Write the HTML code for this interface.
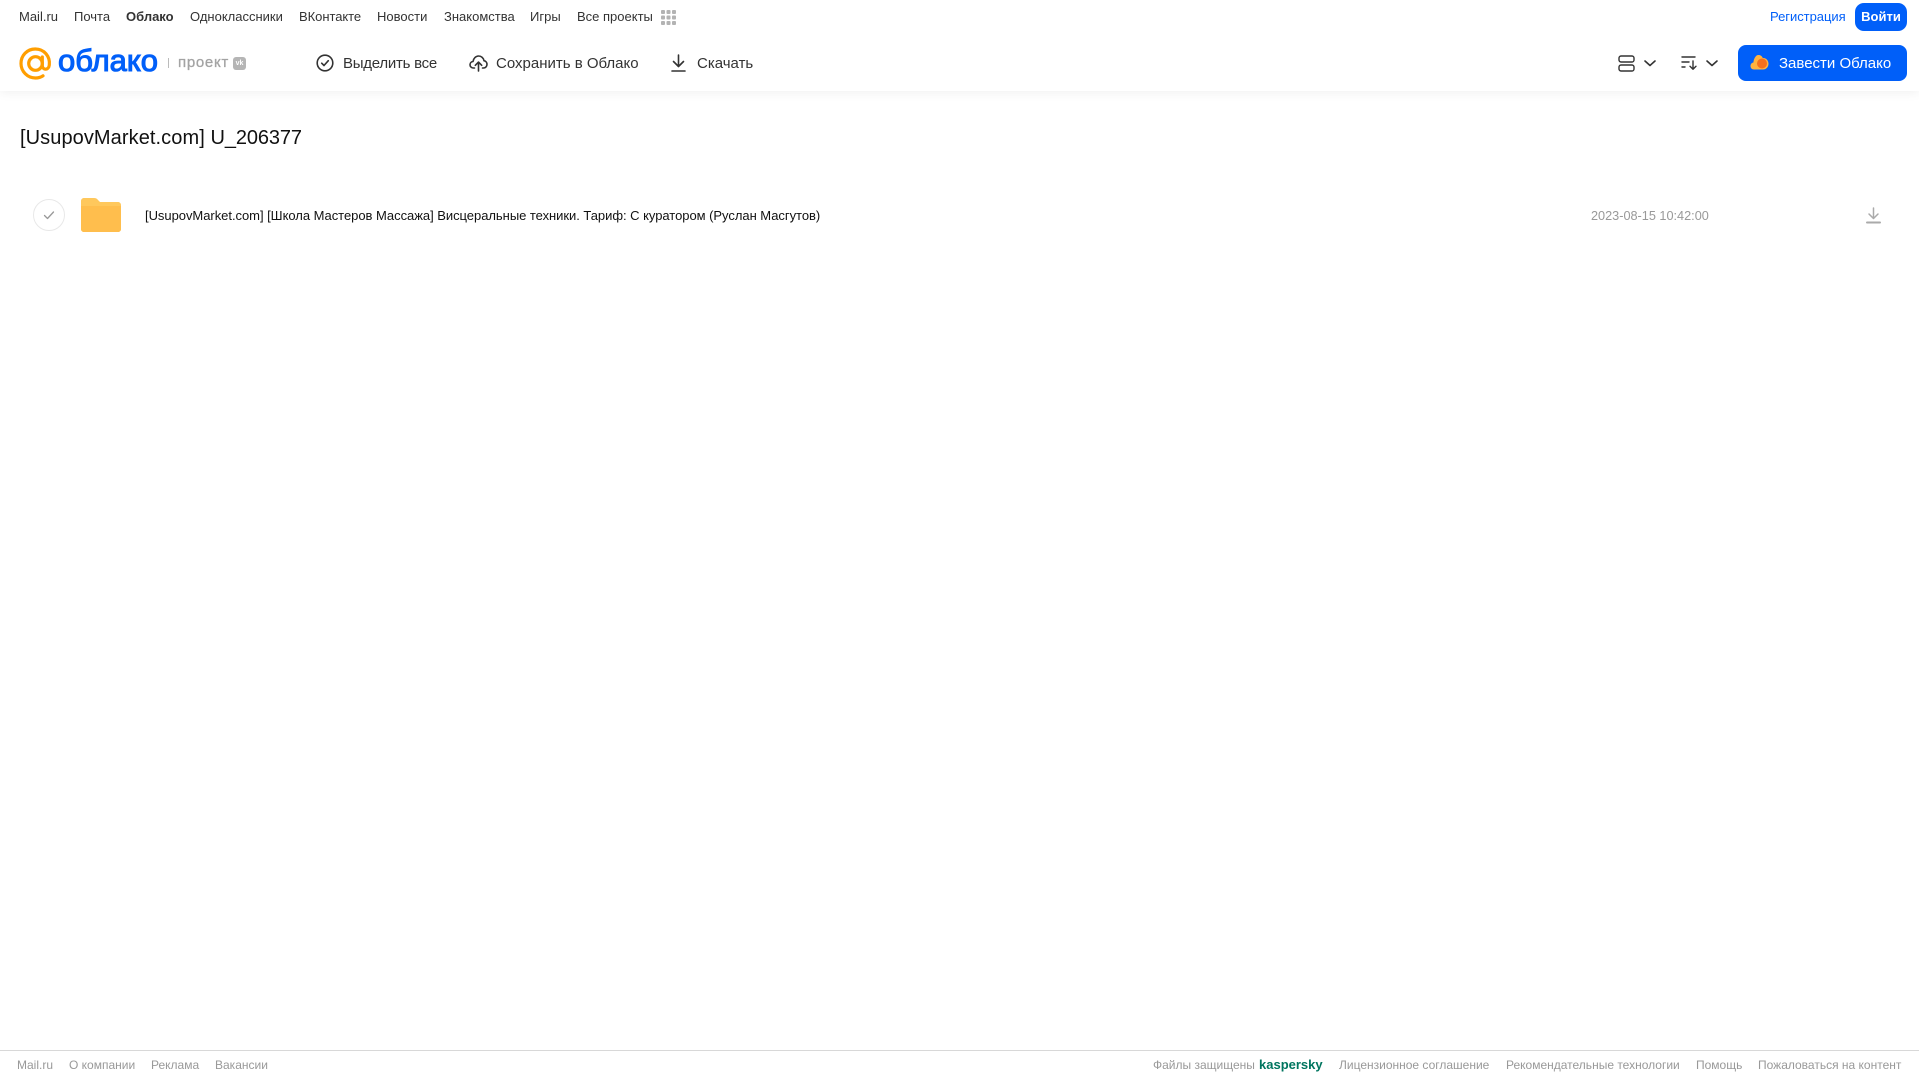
<!DOCTYPE html>
<html lang="ru">
<head>
<meta charset="utf-8">
<title>[UsupovMarket.com] U_206377</title>
<style>
html,body{margin:0;padding:0;background:#fff;width:1919px;height:1079px;overflow:hidden;font-family:"Liberation Sans",Arial,sans-serif}
.t{position:absolute;white-space:nowrap;line-height:16px}
.n{font-size:13px;color:#333;top:9px}
.a{font-size:15px;color:#333;top:56px}
.f{font-size:12px;color:#999;top:1057px}
svg{position:absolute;overflow:visible}
#hdr{position:absolute;left:0;top:0;width:1919px;height:91px;background:#fff;box-shadow:0 2px 10px rgba(0,0,0,.06)}
</style>
</head>
<body>
<div id="hdr"></div>

<span class="t n" style="left:19px">Mail.ru</span>
<span class="t n" style="left:74px">Почта</span>
<span class="t n" style="left:126px;font-weight:700">Облако</span>
<span class="t n" style="left:190px">Одноклассники</span>
<span class="t n" style="left:299px;letter-spacing:-.05px">ВКонтакте</span>
<span class="t n" style="left:377px">Новости</span>
<span class="t n" style="left:444px">Знакомства</span>
<span class="t n" style="left:530px">Игры</span>
<span class="t n" style="left:577px">Все проекты</span>
<svg style="left:661px;top:10px" width="15" height="15" viewBox="0 0 15 15" fill="#b3b3b3">
<rect x="0" y="0" width="4" height="4" rx="1"/><rect x="5.500" y="0" width="4" height="4" rx="1"/><rect x="11" y="0" width="4" height="4" rx="1"/>
<rect x="0" y="5.500" width="4" height="4" rx="1"/><rect x="5.500" y="5.500" width="4" height="4" rx="1"/><rect x="11" y="5.500" width="4" height="4" rx="1"/>
<rect x="0" y="11" width="4" height="4" rx="1"/><rect x="5.500" y="11" width="4" height="4" rx="1"/><rect x="11" y="11" width="4" height="4" rx="1"/>
</svg>

<span class="t n" style="left:1770px;color:#005ff9;letter-spacing:-.03px">Регистрация</span>
<div style="position:absolute;left:1855px;top:3px;width:52px;height:28px;border-radius:9px;background:#005ff9;color:#fff;font-size:13px;font-weight:700;line-height:28px;text-align:center">Войти</div>

<svg style="left:19px;top:47px" width="33" height="33" viewBox="0 0 33 33" fill="none" stroke="#ff9e00" stroke-width="3.200">
<circle cx="16.500" cy="16.500" r="6.800"/>
<path d="M23.300 10v8.500c0 5 6.500 5 7-.5 1-8.500-5-16-14-16C8 2 2 8.500 2 16.500S8.500 31 16.500 31c3 0 5.500-.8 7.500-2.200" stroke-linecap="round"/>
</svg>
<svg style="left:56px;top:40px" width="106" height="44" viewBox="0 0 106 44">
<text x="2" y="31" font-family="Liberation Sans" font-size="31" font-weight="400" fill="#005ff9" stroke="#005ff9" stroke-width="1.100" textLength="100" lengthAdjust="spacingAndGlyphs">облако</text>
</svg>
<div style="position:absolute;left:168px;top:58px;width:1px;height:10px;background:#bbb"></div>
<span class="t" style="left:178px;top:55px;font-size:15px;color:#a3a3a3;letter-spacing:.7px;-webkit-text-stroke:.3px #a3a3a3">проект</span>
<div style="position:absolute;left:233px;top:57px;width:13px;height:13px;border-radius:3px;background:#b5b5b5;color:#fff;font-size:7px;font-weight:700;line-height:13px;text-align:center">vk</div>

<svg style="left:316px;top:54px" width="18" height="18" viewBox="0 0 18 18" fill="none" stroke="#333" stroke-width="1.600" stroke-linecap="round" stroke-linejoin="round">
<circle cx="9" cy="9" r="7.800"/><path d="M5.700 9.200l2.300 2.300 4.300-4.800"/>
</svg>
<span class="t a" style="left:343px;letter-spacing:-.25px">Выделить все</span>

<svg style="left:469px;top:54px" width="19" height="18" viewBox="0 0 19 18" fill="none" stroke="#333" stroke-width="1.600" stroke-linecap="round" stroke-linejoin="round">
<path d="M5.500 14H4.500C2.500 14 1 12.500 1 10.700c0-1.700 1.300-3 3-3.200C4.500 4.300 6.800 2 9.600 2c2.700 0 5 2 5.400 4.700 1.800.3 3 1.900 3 3.600 0 2-1.500 3.700-3.500 3.700h-1"/>
<path d="M9.500 17V8.500M6.300 11.300l3.200-3.200 3.200 3.200"/>
</svg>
<span class="t a" style="left:496px">Сохранить в Облако</span>

<svg style="left:671px;top:54px" width="15" height="18" viewBox="0 0 15 18" fill="none" stroke="#333" stroke-width="1.600" stroke-linecap="round" stroke-linejoin="round">
<path d="M7.500 1v11M2.500 7.500l5 5 5-5M1 17h13"/>
</svg>
<span class="t a" style="left:697px">Скачать</span>

<svg style="left:1618px;top:55px" width="17" height="17" viewBox="0 0 17 17" fill="none" stroke="#333" stroke-width="1.400">
<rect x="1" y="1" width="15" height="6" rx="2"/><rect x="1" y="10" width="15" height="6" rx="2"/>
</svg>
<svg style="left:1644px;top:60px" width="12" height="7" viewBox="0 0 12 7" fill="none" stroke="#333" stroke-width="1.600" stroke-linecap="round" stroke-linejoin="round"><path d="M1 1l5 4.500L11 1"/></svg>
<svg style="left:1681px;top:56px" width="17" height="14" viewBox="0 0 17 14" fill="none" stroke="#333" stroke-width="1.400" stroke-linecap="round" stroke-linejoin="round">
<path d="M1 1h13M1 6h7M1 11h3M12 5v8M9 10.300l3 2.900 3-2.900"/>
</svg>
<svg style="left:1706px;top:60px" width="12" height="7" viewBox="0 0 12 7" fill="none" stroke="#333" stroke-width="1.600" stroke-linecap="round" stroke-linejoin="round"><path d="M1 1l5 4.500L11 1"/></svg>

<div style="position:absolute;left:1738px;top:45px;width:169px;height:36px;border-radius:8px;background:#005ff9"></div>
<svg style="left:1750px;top:54px" width="19" height="17" viewBox="0 0 19 17">
<path d="M4 15.500C1.800 15.500.5 14 .5 12c0-1.800 1.200-3.200 2.900-3.500C3.700 5 5.500 1 8.500 1c2.200 0 3.500 1.300 4.300 3 3.300-.3 5.700 2.500 5.700 5.700 0 3.200-2.300 5.800-5.500 5.800z" fill="#ffb340"/>
<circle cx="12" cy="9.500" r="5" fill="#f4701f"/>
</svg>
<span class="t a" style="left:1779px;color:#fff">Завести Облако</span>

<span class="t" style="left:20px;top:125px;font-size:20px;line-height:26px;color:#111;letter-spacing:.08px">[UsupovMarket.com]</span>
<span class="t" style="left:210.500px;top:125px;font-size:20px;line-height:26px;color:#111;letter-spacing:-.12px">U_206377</span>

<svg style="left:33px;top:199px" width="32" height="32" viewBox="0 0 32 32" fill="none">
<circle cx="16" cy="16" r="15.500" stroke="#e8e8e8"/>
<path d="M11.500 16.500l3 3 6-6.500" stroke="#999" stroke-width="1.300" stroke-linecap="round" stroke-linejoin="round"/>
</svg>
<svg style="left:81px;top:198px" width="40" height="34" viewBox="0 0 40 34">
<path d="M3 0h10c2 0 3 .8 4 2l2 2h18c1.700 0 3 1.300 3 3v24c0 1.700-1.300 3-3 3H3c-1.700 0-3-1.300-3-3V3C0 1.300 1.300 0 3 0z" fill="#ffc85c"/>
<path d="M0 8h40v23c0 1.700-1.300 3-3 3H3c-1.700 0-3-1.300-3-3z" fill="#ffbe4d"/>
</svg>
<span class="t" style="left:145px;top:208px;font-size:13px;color:#111;letter-spacing:-.037px">[UsupovMarket.com] [Школа Мастеров Массажа] Висцеральные техники. Тариф: С куратором (Руслан Масгутов)</span>
<span class="t" style="left:1591px;top:208px;font-size:12.700px;color:#999">2023-08-15 10:42:00</span>
<svg style="left:1866px;top:207px" width="15" height="17" viewBox="0 0 15 17" fill="none" stroke="#aaa" stroke-width="1.500" stroke-linecap="round" stroke-linejoin="round">
<path d="M7.500 1v10M3 7l4.500 4.500L12 7"/><path d="M1 15.500h13" stroke-width="2"/>
</svg>

<div style="position:absolute;left:0;top:1050px;width:1919px;height:1px;background:#d8d8d8"></div>
<span class="t f" style="left:17px">Mail.ru</span>
<span class="t f" style="left:69px">О компании</span>
<span class="t f" style="left:151px">Реклама</span>
<span class="t f" style="left:215px">Вакансии</span>
<span class="t f" style="left:1153px">Файлы защищены</span>
<span class="t f" style="left:1259px;color:#00755f;font-weight:700;font-size:13px">kaspersky</span>
<span class="t f" style="left:1339px">Лицензионное соглашение</span>
<span class="t f" style="left:1506px">Рекомендательные технологии</span>
<span class="t f" style="left:1696px">Помощь</span>
<span class="t f" style="left:1758px">Пожаловаться на контент</span>
</body>
</html>
